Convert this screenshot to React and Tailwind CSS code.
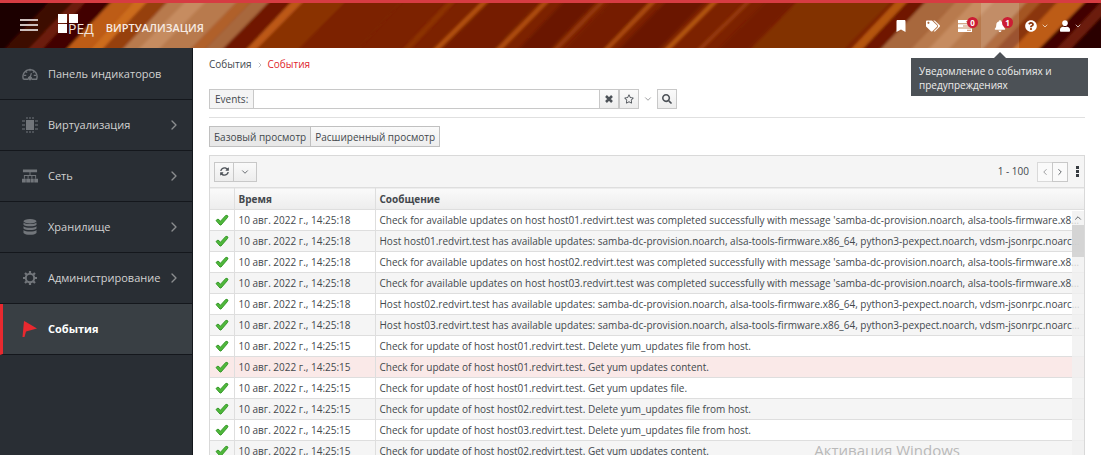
import {
  FaBookmark,
  FaTags,
  FaBell,
  FaQuestionCircle,
  FaUser,
  FaSearch,
  FaRegStar,
  FaSyncAlt,
} from 'react-icons/fa'
import { FiChevronDown, FiChevronLeft, FiChevronRight, FiChevronUp } from 'react-icons/fi'

const PACKAGES =
  'samba-dc-provision.noarch, alsa-tools-firmware.x86_64, python3-pexpect.noarch, vdsm-jsonrpc.noarch, openvswitch.x86_64'

const completed = (host) =>
  `Check for available updates on host ${host}.redvirt.test was completed successfully with message '${PACKAGES}'.`
const available = (host) => `Host ${host}.redvirt.test has available updates: ${PACKAGES}.`
const removed = (host) => `Check for update of host ${host}.redvirt.test. Delete yum_updates file from host.`
const content = (host) => `Check for update of host ${host}.redvirt.test. Get yum updates content.`

const EVENTS = [
  { time: '14:25:18', message: completed('host01') },
  { time: '14:25:18', message: available('host01') },
  { time: '14:25:18', message: completed('host02') },
  { time: '14:25:18', message: completed('host03') },
  { time: '14:25:18', message: available('host02') },
  { time: '14:25:18', message: available('host03') },
  { time: '14:25:15', message: removed('host01') },
  { time: '14:25:15', message: content('host01'), selected: true },
  { time: '14:25:15', message: 'Check for update of host host01.redvirt.test. Get yum updates file.' },
  { time: '14:25:15', message: removed('host02') },
  { time: '14:25:15', message: removed('host03') },
  { time: '14:25:15', message: content('host02') },
]

// [bottom left, bottom right, top left, top right, color]
const STRIPES = [
  [-50, 6, -8, 48, '#1e0303'],
  [6, 30, 48, 72, '#3e0805'],
  [30, 44, 72, 84, '#6c1a0a'],
  [44, 68, 84, 110, '#420601'],
  [68, 92, 110, 132, '#bd5c18'],
  [92, 104, 132, 146, '#cc6c1e'],
  [104, 124, 146, 166, '#96400f'],
  [124, 192, 166, 236, '#b87a4e'],
  [140, 160, 184, 204, '#c68c60'],
  [192, 206, 236, 250, '#b0602c'],
  [206, 224, 250, 268, '#a8683c'],
  [224, 248, 268, 290, '#701600'],
  [248, 258, 290, 302, '#bc5812'],
  [258, 300, 302, 344, '#8a3004'],
  [300, 360, 344, 400, '#7c2400'],
  [404, 412, 446, 454, '#8c3004'],
  [434, 441, 480, 487, '#b0500e'],
  [444, 496, 488, 538, '#741c00'],
  [497, 504, 541, 548, '#ac4c0c'],
  [520, 552, 562, 594, '#6a1400'],
  [554, 560, 598, 604, '#943808'],
  [566, 604, 610, 648, '#741a00'],
  [605, 611, 648, 655, '#a8480c'],
  [620, 660, 664, 704, '#6a1400'],
  [665, 672, 710, 717, '#b0520e'],
  [698, 704, 744, 750, '#943808'],
  [720, 750, 764, 794, '#741c00'],
  [752, 846, 796, 890, '#823002'],
  [852, 864, 894, 906, '#b4540f'],
  [864, 882, 906, 924, '#701600'],
  [882, 912, 924, 954, '#a8683c'],
  [912, 984, 954, 1026, '#b87a4e'],
  [930, 950, 972, 992, '#c68c60'],
  [984, 998, 1026, 1040, '#a45420'],
  [998, 1014, 1040, 1056, '#8a3408'],
  [1014, 1040, 1056, 1084, '#bd5c18'],
  [1040, 1058, 1084, 1100, '#420601'],
  [1058, 1072, 1100, 1114, '#6c1a0a'],
  [1072, 1130, 1114, 1170, '#2c0403'],
]

function HeaderStripes() {
  return (
    <svg
      aria-hidden="true"
      viewBox="0 0 1101 45"
      preserveAspectRatio="none"
      className="absolute inset-0 h-full w-full"
    >
      <defs>
        <filter id="soft" x="-2%" y="-20%" width="104%" height="140%">
          <feGaussianBlur stdDeviation="1.6 1" />
        </filter>
      </defs>
      <rect width="1101" height="45" fill="#7c2200" />
      <g filter="url(#soft)">
        {/* stripes run past both edges so the blur stays inside the bar */}
        {STRIPES.map(([bl, br, tl, tr, color]) => (
          <polygon key={bl} points={`${bl - 5},50 ${br - 5},50 ${tr + 5},-5 ${tl + 5},-5`} fill={color} />
        ))}
      </g>
    </svg>
  )
}

function DashboardIcon() {
  return (
    <svg viewBox="0 0 17 16" className="size-4" fill="none" stroke="currentColor" aria-hidden="true">
      <path d="M1.500 13.500a7.500 7.500 0 1 1 14 0h-5M1.500 13.500h5" strokeWidth="1.500" />
      <path d="M8.500 2.500v2.500M3.500 5l2 1.500M13.500 5l-2 1.500M2 9.500h2.500M12.500 9.500H15M8.500 12l1.500-5" strokeWidth="1.300" />
      <circle cx="8.500" cy="12.500" r="1.800" fill="currentColor" />
    </svg>
  )
}

function ChipIcon() {
  return (
    <svg viewBox="0 0 16 16" className="size-4" fill="currentColor" aria-hidden="true">
      <rect x="4" y="3" width="8" height="10" />
      <path d="M4 0h2v2H4zM7 0h2v2H7zM10 0h2v2h-2zM4 14h2v2H4zM7 14h2v2H7zM10 14h2v2h-2z" opacity=".5" />
      <path d="M0 3h3v2H0zM0 7h3v2H0zM0 11h3v2H0zM13 3h3v2h-3zM13 7h3v2h-3zM13 11h3v2h-3z" opacity=".5" />
    </svg>
  )
}

function NetworkIcon() {
  return (
    <svg viewBox="0 0 17 16" className="size-4" fill="currentColor" aria-hidden="true">
      <path d="M1 1h15v3H1zM8 4h1v4H8zM2 7h13v1H2zM2 8h1v3H2zM6 8h1v3H6zM10 8h1v3h-1zM14 8h1v3h-1z" />
      <path d="M0 11h4v4H0zM4.500 11h4v4h-4zM9 11h3.500v4H9zM13 11h4v4h-4z" />
    </svg>
  )
}

function StorageIcon() {
  return (
    <svg viewBox="0 0 16 16" className="size-4" fill="currentColor" aria-hidden="true">
      <ellipse cx="8" cy="2.200" rx="6.500" ry="2.200" />
      <path d="M1.500 3.500c2 2 11 2 13 0v2.300c-2 2-11 2-13 0z" />
      <path d="M1.500 7.200c2 2 11 2 13 0v2.300c-2 2-11 2-13 0z" />
      <path d="M1.500 10.900c2 2 11 2 13 0v3c-2 2.500-11 2.500-13 0z" />
    </svg>
  )
}

function GearIcon() {
  return (
    <svg viewBox="0 0 16 16" className="size-4" fill="none" stroke="currentColor" aria-hidden="true">
      <circle cx="8" cy="8" r="4.200" strokeWidth="2" />
      <g strokeWidth="2.200">
        <path d="M8 1v2.500M8 12.500V15M1 8h2.500M12.500 8H15" />
        <path d="M3 3l1.800 1.800M11.200 11.200L13 13M13 3l-1.800 1.800M4.800 11.200L3 13" />
      </g>
    </svg>
  )
}

function FlagIcon() {
  return (
    <svg viewBox="0 0 16 16" className="size-4" fill="#e8292f" aria-hidden="true">
      <path d="M2 0l2 1 11 6.500L4 10.500 2.500 16H.5z" />
    </svg>
  )
}

function CheckIcon() {
  return (
    <svg viewBox="0 0 14 12" className="mx-auto h-3 w-3.5" aria-hidden="true">
      <path d="M1 6.500L3 5l2.500 2.200L11 1.200l2 .8-.5 1.500L6 11H5z" fill="#4fb83a" stroke="#36982a" />
    </svg>
  )
}

function TasksIcon() {
  return (
    <svg viewBox="0 0 14 12" className="h-3 w-3.5" fill="currentColor" aria-hidden="true">
      <path d="M0 0h14v3.300H0zM0 4.300h14v3.300H0zM0 8.600h14V12H0z" />
      <path d="M8 1.200h5v1H8zM5 5.500h8v1H5zM9 9.800h4v1H9z" fill="#c98f62" />
    </svg>
  )
}

const NAV = [
  { label: 'Панель индикаторов', icon: <DashboardIcon /> },
  { label: 'Виртуализация', icon: <ChipIcon />, nested: true },
  { label: 'Сеть', icon: <NetworkIcon />, nested: true },
  { label: 'Хранилище', icon: <StorageIcon />, nested: true },
  { label: 'Администрирование', icon: <GearIcon />, nested: true },
  { label: 'События', icon: <FlagIcon />, active: true },
]

function Badge({ children }) {
  return (
    <span className="absolute top-3.5 left-1/2 ml-0.5 flex size-[11px] items-center justify-center rounded-full bg-[#cc1c34] text-[8px] font-bold">
      {children}
    </span>
  )
}

function Header() {
  return (
    <header className="relative shrink-0 border-t-3 border-[#d63c42] text-white">
      <div className="relative flex h-[45px] items-center">
        <HeaderStripes />
        <button type="button" aria-label="Меню" className="relative ml-5 text-[#cdbfbd]">
          <svg viewBox="0 0 18 13" className="h-[13px] w-[18px]" fill="currentColor" aria-hidden="true">
            <path d="M0 0h18v2H0zM0 5h18v2H0zM0 10h18v2H0z" />
          </svg>
        </button>
        <a href="#home" className="relative ml-5 flex items-center">
          <svg viewBox="0 0 20 19" className="-mt-1 h-[19px] w-5" fill="#fff" aria-hidden="true">
            <path d="M0 0h9v9H0zM11 0h9v9h-9zM0 10h9v9H0z" />
          </svg>
          <span className="-ml-2.5 pt-1.5 text-[14px] leading-4 text-[#f0e4dd]">РЕД</span>
          <span className="ml-3 pt-1 text-[11px] leading-4 font-semibold text-[#f6ebe3]">ВИРТУАЛИЗАЦИЯ</span>
        </a>
        <div className="relative mr-3.5 ml-auto flex h-full items-center">
          <button type="button" aria-label="Закладки" className="flex h-full w-8 items-center justify-center">
            <FaBookmark className="h-3 w-3" />
          </button>
          <button type="button" aria-label="Теги" className="flex h-full w-8 items-center justify-center">
            <FaTags className="size-3.5" />
          </button>
          <button type="button" aria-label="Задачи" className="relative flex h-full w-8 items-center justify-center">
            <TasksIcon />
            <Badge>0</Badge>
          </button>
          <button
            type="button"
            aria-label="Уведомления"
            aria-describedby="bell-tip"
            className="relative flex h-full w-[38px] items-center justify-center bg-white/15"
          >
            <FaBell className="size-3" />
            <Badge>1</Badge>
          </button>
          <button type="button" aria-label="Справка" className="flex h-full w-9 items-center justify-center gap-1">
            <FaQuestionCircle className="size-3" />
            <FiChevronDown className="size-2" />
          </button>
          <button type="button" aria-label="Пользователь" className="flex h-full w-8 items-center justify-center gap-1">
            <FaUser className="h-3 w-2.5" />
            <FiChevronDown className="size-2" />
          </button>
        </div>
      </div>
      <div
        id="bell-tip"
        role="tooltip"
        className="absolute top-[55px] right-[13px] z-20 w-[177px] bg-[#4c5156] px-2 pt-1.5 pb-1 text-[10px] leading-[14px] text-[#ececec]"
      >
        <span className="absolute -top-[6px] left-1/2 size-0 -translate-x-1/2 border-x-6 border-b-6 border-x-transparent border-b-[#4c5156]" />
        Уведомление о событиях и предупреждениях
      </div>
    </header>
  )
}

function Sidebar() {
  return (
    <nav className="w-[193px] shrink-0 border-r border-[#14171c] bg-[#292e34] pt-px text-[11px] text-[#d1d1d1]">
      {NAV.map((item) => (
        <a
          key={item.label}
          href="#nav"
          aria-current={item.active ? 'page' : undefined}
          className={
            item.active
              ? 'flex h-[51px] items-center border-b border-l-3 border-b-[#14171c] border-l-[#e8292f] bg-[#393f44] pr-2.5 pl-[19px] font-bold text-white'
              : 'flex h-[51px] items-center border-b border-b-[#14171c] pr-2.5 pl-[22px]'
          }
        >
          <span className="mr-2.5 text-[#72767b]">{item.icon}</span>
          {item.label}
          {item.nested && <FiChevronRight className="ml-auto size-4 text-[#8b8d8f]" />}
        </a>
      ))}
    </nav>
  )
}

const SMALL_BUTTON =
  'flex h-5 w-5 items-center justify-center border border-[#c8c8c8] bg-linear-to-b from-[#fafafa] to-[#ededed] text-[#4d5258]'

function SearchBar() {
  return (
    <form className="flex h-5 w-[468px] text-[10px]" onSubmit={(e) => e.preventDefault()}>
      <label htmlFor="query" className="flex items-center border border-[#c8c8c8] bg-[#f4f4f4] px-[5px]">
        Events:
      </label>
      <input
        id="query"
        type="text"
        className="min-w-0 flex-1 border-y border-[#c8c8c8] bg-white px-1 outline-none"
      />
      <button type="button" aria-label="Очистить" className={SMALL_BUTTON}>
        <svg viewBox="0 0 8 8" className="size-2" stroke="currentColor" strokeWidth="2.500" aria-hidden="true">
          <path d="M1 1l6 6M7 1L1 7" />
        </svg>
      </button>
      <button type="button" aria-label="В закладки" className={SMALL_BUTTON}>
        <FaRegStar className="size-2.5" />
      </button>
      <button type="button" aria-label="Список" className="flex h-5 w-[18px] items-center justify-center text-[#8b8d8f]">
        <FiChevronDown className="size-2.5" />
      </button>
      <button type="submit" aria-label="Найти" className={SMALL_BUTTON}>
        <FaSearch className="size-2.5" />
      </button>
    </form>
  )
}

function EventsTable() {
  return (
    <section className="mt-2 flex min-h-0 flex-1 flex-col border border-b-0 border-[#d9d9d9]">
      <div className="flex h-[31px] shrink-0 items-center bg-[#f5f5f5] pr-1 pl-1">
        <div className="flex">
          <button type="button" aria-label="Обновить" className={SMALL_BUTTON}>
            <FaSyncAlt className="size-[9px]" />
          </button>
          <button type="button" aria-label="Интервал обновления" className={`${SMALL_BUTTON} -ml-px w-6`}>
            <FiChevronDown className="size-2.5" />
          </button>
        </div>
        <span className="ml-auto text-[10px]">1 - 100</span>
        <div className="ml-2 flex">
          <button type="button" aria-label="Назад" disabled className="flex h-5 w-4 items-center justify-center border border-[#d9d9d9] bg-[#fafafa] text-[#8b8d8f]">
            <FiChevronLeft className="size-2.5" />
          </button>
          <button type="button" aria-label="Вперёд" className="-ml-px flex h-5 w-4 items-center justify-center border border-[#c8c8c8] bg-[#fafafa]">
            <FiChevronRight className="size-2.5" />
          </button>
        </div>
        <button type="button" aria-label="Столбцы" className="ml-2 flex w-1 flex-col gap-px">
          <span className="h-[3px] w-[3px] bg-[#363b40]" />
          <span className="h-[3px] w-[3px] bg-[#363b40]" />
          <span className="h-[3px] w-[3px] bg-[#363b40]" />
        </button>
      </div>

      <div className="relative min-h-0 flex-1 overflow-hidden">
        <table className="w-full table-fixed border-collapse text-left text-[10px] leading-[14px]">
          <thead>
            <tr className="h-[22px] border-y border-[#dedede] bg-linear-to-b from-[#fafafa] to-[#ededed]">
              <th className="w-6 border-r border-[#dedede]" aria-label="Статус" />
              <th className="w-[141px] border-r border-[#dedede] px-1 font-bold">Время</th>
              <th className="px-1 font-bold">Сообщение</th>
            </tr>
          </thead>
          <tbody>
            {EVENTS.map((event, i) => (
              <tr
                key={i}
                className={
                  event.selected
                    ? 'h-[21px] border-b border-[#dedede] bg-[#fae9e8]'
                    : 'h-[21px] border-b border-[#dedede] bg-white even:bg-[#f5f5f5]'
                }
              >
                <td className="border-r border-[#dedede]">
                  <CheckIcon />
                </td>
                <td className="border-r border-[#dedede] px-1 whitespace-nowrap">10 авг. 2022 г., {event.time}</td>
                <td className="truncate px-1">{event.message}</td>
              </tr>
            ))}
          </tbody>
        </table>
        {/* scrollbar track over the right edge of the rows */}
        <div className="absolute top-6 right-0 bottom-0 flex w-3 flex-col items-center bg-[#f0f0f0]/80">
          <FiChevronUp className="my-0.5 size-2.5" />
          <div className="h-8 w-full bg-[#cdcdcd]/80" />
        </div>
      </div>
    </section>
  )
}

export default function App() {
  return (
    <div className="flex h-screen flex-col overflow-hidden bg-white font-['Open_Sans','Noto_Sans',sans-serif] text-[#43484d]">
      <Header />
      <div className="flex min-h-0 flex-1">
        <Sidebar />
        <main className="relative flex min-w-0 flex-1 flex-col pr-4 pl-4">
          <div className="flex h-[41px] items-center gap-1 pb-2 text-[10px]">
            <a href="#events">События</a>
            <FiChevronRight className="size-2 text-[#9c9c9c]" />
            <span className="text-[#e0252b]">События</span>
          </div>
          <SearchBar />
          <div className="mt-2 border-t border-[#e0e0e0] pt-2">
            <div className="flex text-[10px] leading-[14px]">
              <button type="button" aria-pressed="true" className="h-[21px] border border-[#c0c0c0] bg-[#e8e8e8] px-1">
                Базовый просмотр
              </button>
              <button type="button" aria-pressed="false" className="-ml-px h-[21px] border border-[#c0c0c0] bg-linear-to-b from-[#fafafa] to-[#ededed] px-1">
                Расширенный просмотр
              </button>
            </div>
          </div>
          <EventsTable />
          <p className="pointer-events-none absolute right-[141px] -bottom-1 text-[15px] leading-[18px] text-[#b9b9b9]">
            Активация Windows
          </p>
        </main>
      </div>
    </div>
  )
}
